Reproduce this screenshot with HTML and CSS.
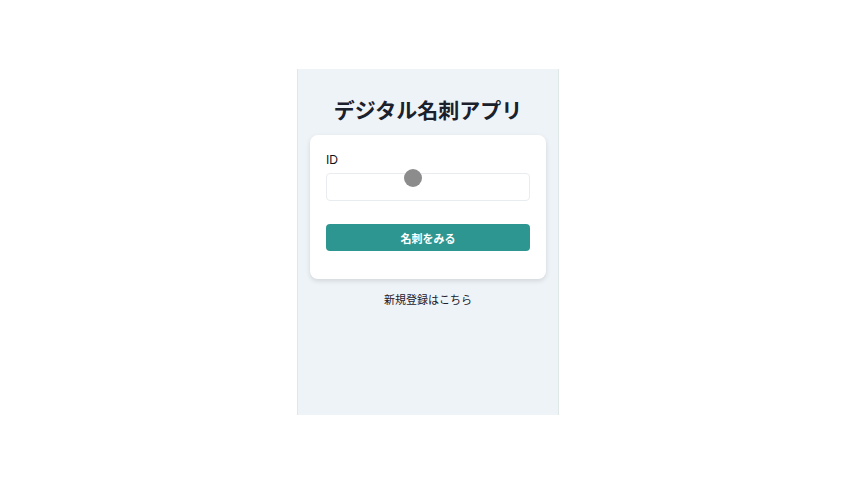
FILE: index.html
```html
<!DOCTYPE html>
<html lang="ja">
<head>
<meta charset="utf-8">
<title>デジタル名刺アプリ</title>
<link rel="stylesheet" href="styles.css">
</head>
<body>
<main class="panel">
  <h1 class="title">デジタル名刺アプリ</h1>
  <form class="card">
    <label class="label" for="uid">ID</label>
    <div class="field">
      <input id="uid" class="input" type="text">
      <span class="touch"></span>
    </div>
    <button type="button" class="btn">名刺をみる</button>
  </form>
  <a class="link" href="#">新規登録はこちら</a>
</main>
</body>
</html>
```
FILE: styles.css
```css
html, body {
  margin: 0;
  padding: 0;
  background: #ffffff;
}
body {
  font-family: "Noto Sans CJK JP", "Noto Sans", sans-serif;
  color: #1a202c;
  display: flex;
  justify-content: center;
  padding-top: 69px;
  padding-left: 3px;
}
.panel {
  width: 262px;
  height: 346px;
  box-sizing: border-box;
  background: #eef3f8;
  border-left: 1px solid #dfe8e6;
  border-right: 1px solid #dfe8e6;
  padding: 26px 12px 0;
  display: flex;
  flex-direction: column;
  align-items: stretch;
}
.title {
  margin: 0;
  text-align: center;
  font-size: 21px;
  font-weight: 700;
  line-height: 28px;
  color: #1a202c;
}
.card {
  margin-top: 12px;
  background: #ffffff;
  border-radius: 8px;
  box-shadow: 0 2px 5px rgba(0, 0, 0, 0.12);
  padding: 16px 16px 28px;
  display: flex;
  flex-direction: column;
}
.label {
  font-family: "Liberation Sans", "Noto Sans CJK JP", sans-serif;
  font-size: 12px;
  line-height: 18px;
  color: #111;
}
.field {
  position: relative;
  margin-top: 4px;
}
.input {
  display: block;
  width: 100%;
  box-sizing: border-box;
  height: 28px;
  border: 1px solid #e8ecf0;
  border-radius: 4px;
  background: #fff;
  outline: none;
}
.touch {
  position: absolute;
  left: 78px;
  top: -4px;
  width: 18px;
  height: 18px;
  border-radius: 50%;
  background: #8c8c8c;
}
.btn {
  margin-top: 23px;
  height: 27px;
  border: none;
  border-radius: 4px;
  background: #2e9690;
  color: #fff;
  font-family: inherit;
  font-size: 11px;
  font-weight: 700;
}
.link {
  margin-top: 12px;
  text-align: center;
  font-size: 11px;
  color: #1a202c;
  text-decoration: none;
}
```
